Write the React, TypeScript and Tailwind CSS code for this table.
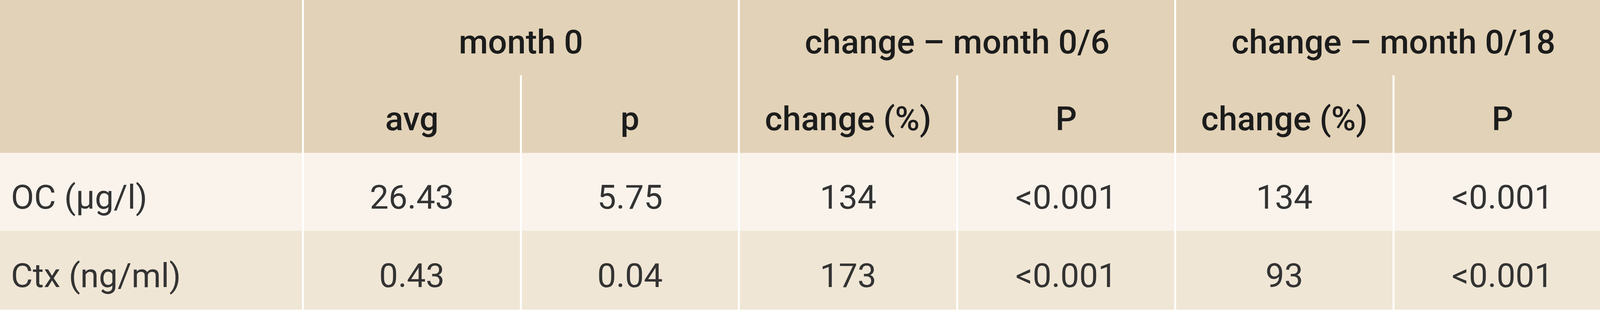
import React from "react";

const groups = ["month 0", "change – month 0/6", "change – month 0/18"];
const subHeads = ["avg", "p", "change (%)", "P", "change (%)", "P"];

const rows = [
  { label: "OC (µg/l)", values: ["26.43", "5.75", "134", "<0.001", "134", "<0.001"], bg: "bg-[#f9f3ec]", h: "h-[200px]" },
  { label: "Ctx (ng/ml)", values: ["0.43", "0.04", "173", "<0.001", "93", "<0.001"], bg: "bg-[#f0e6d5]", h: "h-[202px]" },
];

export default function App() {
  return (
    <div className="w-full h-[800px] overflow-hidden bg-white font-['Roboto',sans-serif] text-[86px] leading-[1.2]">
      {/* table is a little wider than the frame; the last column is clipped */}
      <div className="grid w-[100.66%] grid-cols-[1060fr_repeat(6,766fr)]">
        <div className="row-span-2 bg-[#e2d2b7]" />
        {groups.map((g) => (
          <div
            key={g}
            className="col-span-2 flex h-[193px] items-center justify-center whitespace-nowrap border-l-[5px] border-white bg-[#e2d2b7] pt-[22px] font-medium text-[#1c1c1c]"
          >
            {g}
          </div>
        ))}

        {subHeads.map((s, i) => (
          <div
            key={i}
            className="flex h-[199px] items-center justify-center whitespace-nowrap border-l-[5px] border-white bg-[#e2d2b7] pt-[24px] font-medium text-[#1c1c1c]"
          >
            {s}
          </div>
        ))}

        {rows.map((r) => (
          <React.Fragment key={r.label}>
            <div className={`${r.bg} ${r.h} flex items-center whitespace-nowrap pl-[28px] pt-[28px] text-[#333]`}>
              {r.label}
            </div>
            {r.values.map((v, i) => (
              <div
                key={i}
                className={`${r.bg} ${r.h} flex items-center justify-center whitespace-nowrap border-l-[5px] border-white pt-[28px] text-[#333]`}
              >
                {v}
              </div>
            ))}
          </React.Fragment>
        ))}
      </div>
    </div>
  );
}
